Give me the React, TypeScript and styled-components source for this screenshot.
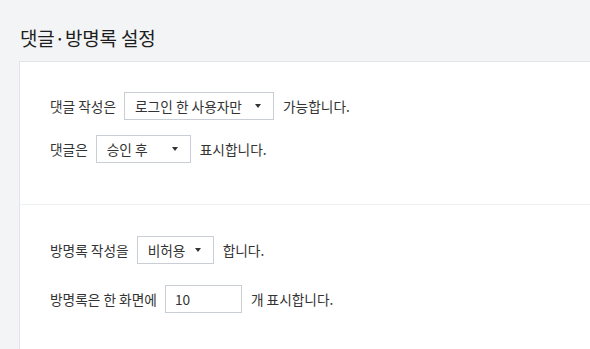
import styled, {createGlobalStyle} from "styled-components";

const GlobalStyle = createGlobalStyle`
  html, body {
    margin: 0;
    padding: 0;
    background: #f3f4f6;
    overflow: hidden;
  }
  body {
    font-family: "Noto Sans CJK KR", "Noto Sans", sans-serif;
    color: #333;
  }
`;

const Page = styled.div`
  width: 590px;
  height: 349px;
  overflow: hidden;
`;

const Title = styled.h1`
  margin: 0;
  padding: 27px 0 12px 20px;
  font-size: 19px;
  line-height: 22px;
  font-weight: 400;
  color: #1e1e1e;
  letter-spacing: -0.2px;
`;

const Card = styled.div`
  margin-left: 19px;
  background: #fff;
  border: 1px solid #e1e4e8;
  border-right: 0;
  border-bottom: 0;
  height: 400px;
`;

const Section = styled.section<{$gap: number; $top: number; $bottom: number}>`
  display: flex;
  flex-direction: column;
  gap: ${({$gap}) => $gap}px;
  padding: ${({$top}) => $top}px 30px ${({$bottom}) => $bottom}px;
  & + & {
    border-top: 1px solid #eef0f2;
  }
`;

const Row = styled.div`
  display: flex;
  align-items: center;
  gap: 8px;
  font-size: 13.7px;
  line-height: 28px;
  height: 28px;
`;

const Text = styled.span`
  white-space: nowrap;
`;

const Select = styled.div<{$width: number}>`
  box-sizing: border-box;
  width: ${({$width}) => $width}px;
  height: 28px;
  border: 1px solid #c9ced6;
  display: flex;
  align-items: center;
  justify-content: space-between;
  padding: 0 12px 0 10px;
  margin-right: 1px;
  background: #fff;
  color: #333;
`;

const Arrow = styled.span`
  width: 0;
  height: 0;
  border-left: 3.5px solid transparent;
  border-right: 3.5px solid transparent;
  border-top: 4px solid #333;
`;

const Input = styled.div`
  box-sizing: border-box;
  width: 77px;
  height: 28px;
  border: 1px solid #c9ced6;
  padding: 0 9px;
  margin-right: 1px;
  display: flex;
  align-items: center;
`;

export default function App() {
  return (
    <Page>
      <GlobalStyle />
      <Title>댓글·방명록 설정</Title>
      <Card>
        <Section $gap={15} $top={30} $bottom={41}>
          <Row>
            <Text>댓글 작성은</Text>
            <Select $width={150}>
              <span>로그인 한 사용자만</span>
              <Arrow />
            </Select>
            <Text>가능합니다.</Text>
          </Row>
          <Row>
            <Text>댓글은</Text>
            <Select $width={95}>
              <span>승인 후</span>
              <Arrow />
            </Select>
            <Text>표시합니다.</Text>
          </Row>
        </Section>
        <Section $gap={21} $top={31} $bottom={40}>
          <Row>
            <Text>방명록 작성을</Text>
            <Select $width={77}>
              <span>비허용</span>
              <Arrow />
            </Select>
            <Text>합니다.</Text>
          </Row>
          <Row>
            <Text>방명록은 한 화면에</Text>
            <Input>10</Input>
            <Text>개 표시합니다.</Text>
          </Row>
        </Section>
      </Card>
    </Page>
  );
}
